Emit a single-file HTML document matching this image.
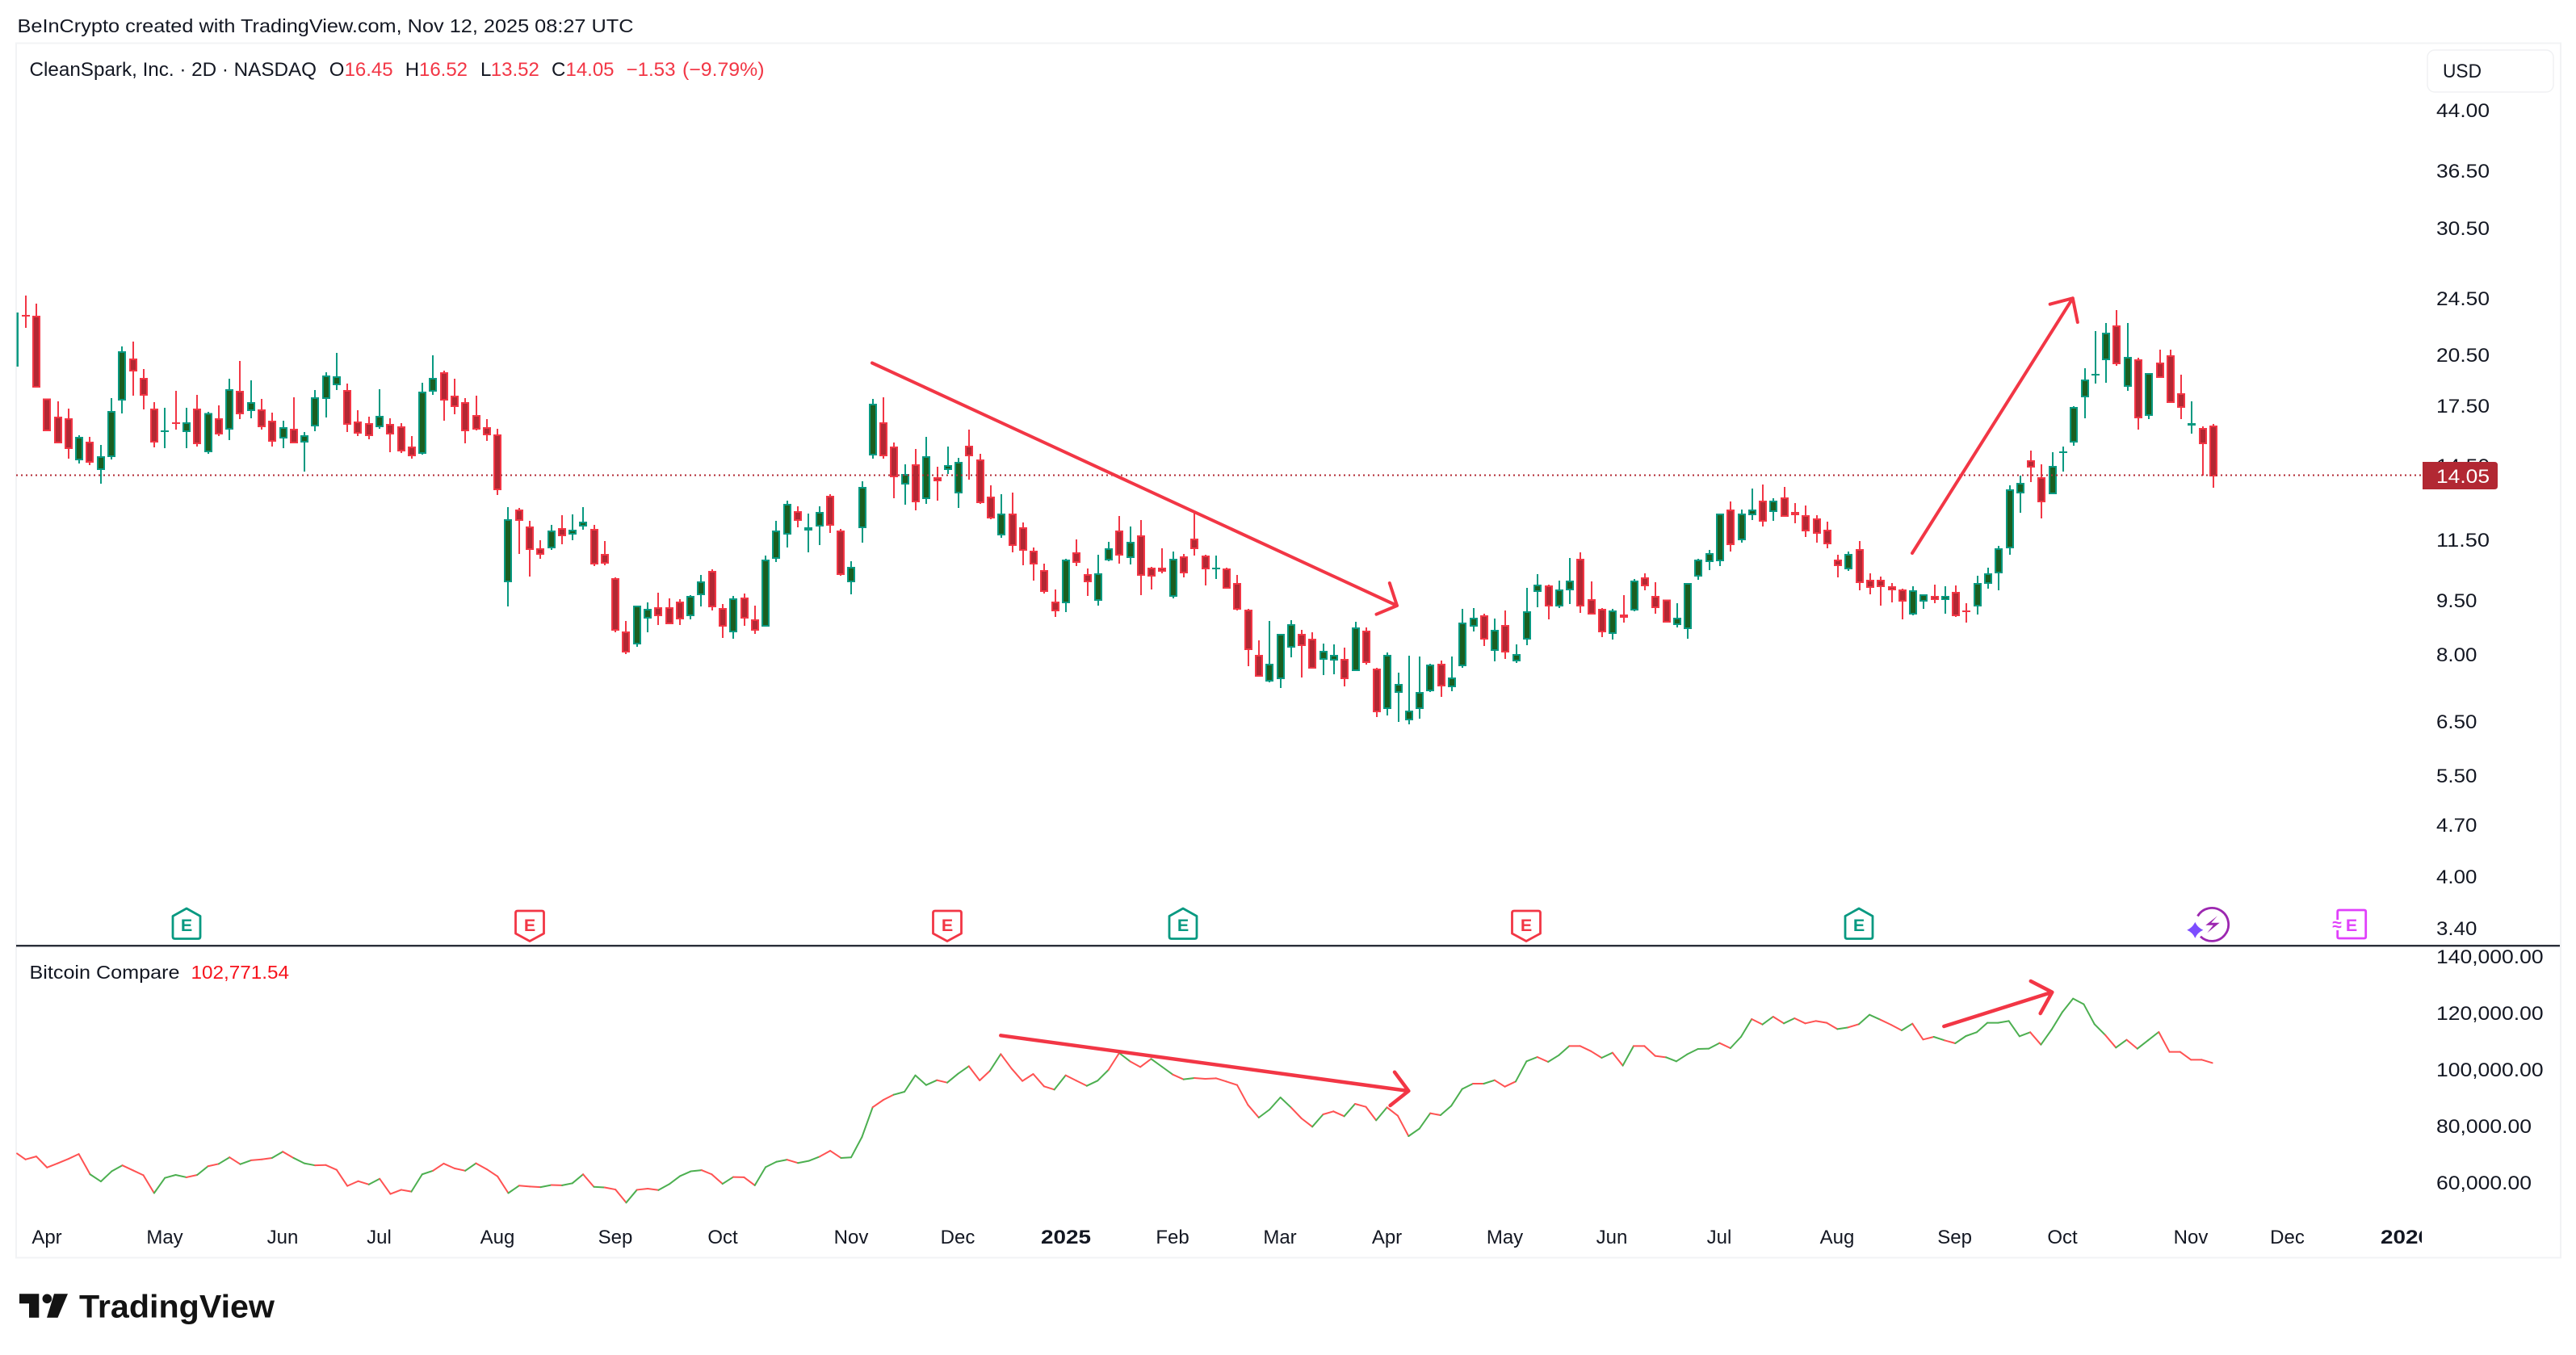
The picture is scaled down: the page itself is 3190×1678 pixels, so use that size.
<!DOCTYPE html>
<html>
<head>
<meta charset="utf-8">
<title>CleanSpark chart</title>
<style>
html,body{margin:0;padding:0;background:#fff;width:3190px;height:1678px;overflow:hidden}
svg{display:block;font-size:24px}
text{font-family:"Liberation Sans",sans-serif;fill:#131722}
.r{fill:#f23645}
.b{font-weight:bold}
</style>
</head>
<body>
<svg id="s" xmlns="http://www.w3.org/2000/svg" width="3190" height="1678" viewBox="0 0 3190 1678">
<defs>
<clipPath id="tc"><rect x="20" y="1500" width="2979" height="56"/></clipPath>
</defs>
<rect width="3190" height="1678" fill="#fff"/>
<text x="21.5" y="40" font-size="23.5" textLength="763" lengthAdjust="spacingAndGlyphs">BeInCrypto created with TradingView.com, Nov 12, 2025 08:27 UTC</text>
<rect x="20" y="53.5" width="3151" height="1504" fill="#fff" stroke="#f2f3f5" stroke-width="2"/>

<g id="candles" shape-rendering="crispEdges"></g>
<line x1="20" y1="588.5" x2="3000" y2="588.5" stroke="#b22833" stroke-width="2" stroke-dasharray="2 4"/>
<g id="btc" fill="none" stroke-width="2" stroke-linejoin="round"></g>

<rect x="3006" y="62" width="156" height="52" rx="9" fill="#fff" stroke="#f0f1f3" stroke-width="1.5"/>
<text x="3025" y="96" textLength="48" lengthAdjust="spacingAndGlyphs">USD</text>

<text x="36.5" y="94" textLength="355.5" lengthAdjust="spacingAndGlyphs">CleanSpark, Inc. · 2D · NASDAQ</text>
<text x="407.7" y="94">O</text><text class="r" x="426.6" y="94" textLength="60" lengthAdjust="spacingAndGlyphs">16.45</text>
<text x="501.7" y="94">H</text><text class="r" x="519" y="94" textLength="60" lengthAdjust="spacingAndGlyphs">16.52</text>
<text x="595" y="94">L</text><text class="r" x="607.8" y="94" textLength="60" lengthAdjust="spacingAndGlyphs">13.52</text>
<text x="683" y="94">C</text><text class="r" x="700.5" y="94" textLength="60" lengthAdjust="spacingAndGlyphs">14.05</text>
<text class="r" x="775.5" y="94" textLength="61" lengthAdjust="spacingAndGlyphs">−1.53</text>
<text class="r" x="845" y="94" textLength="101.5" lengthAdjust="spacingAndGlyphs">(−9.79%)</text>

<g id="prices">
<text x="3017" y="145" textLength="66" lengthAdjust="spacingAndGlyphs">44.00</text>
<text x="3017" y="220" textLength="66" lengthAdjust="spacingAndGlyphs">36.50</text>
<text x="3017" y="291" textLength="66" lengthAdjust="spacingAndGlyphs">30.50</text>
<text x="3017" y="378" textLength="66" lengthAdjust="spacingAndGlyphs">24.50</text>
<text x="3017" y="448" textLength="66" lengthAdjust="spacingAndGlyphs">20.50</text>
<text x="3017" y="511" textLength="66" lengthAdjust="spacingAndGlyphs">17.50</text>
<text x="3017" y="585" textLength="66" lengthAdjust="spacingAndGlyphs">14.50</text>
<text x="3017" y="677" textLength="66" lengthAdjust="spacingAndGlyphs">11.50</text>
<text x="3017" y="752" textLength="50.4" lengthAdjust="spacingAndGlyphs">9.50</text>
<text x="3017" y="819" textLength="50.4" lengthAdjust="spacingAndGlyphs">8.00</text>
<text x="3017" y="902" textLength="50.4" lengthAdjust="spacingAndGlyphs">6.50</text>
<text x="3017" y="969" textLength="50.4" lengthAdjust="spacingAndGlyphs">5.50</text>
<text x="3017" y="1030" textLength="50.4" lengthAdjust="spacingAndGlyphs">4.70</text>
<text x="3017" y="1094" textLength="50.4" lengthAdjust="spacingAndGlyphs">4.00</text>
<text x="3017" y="1158" textLength="50.4" lengthAdjust="spacingAndGlyphs">3.40</text>
<text x="3017" y="1193" textLength="132.6" lengthAdjust="spacingAndGlyphs">140,000.00</text>
<text x="3017" y="1263" textLength="132.6" lengthAdjust="spacingAndGlyphs">120,000.00</text>
<text x="3017" y="1333" textLength="132.6" lengthAdjust="spacingAndGlyphs">100,000.00</text>
<text x="3017" y="1403" textLength="118" lengthAdjust="spacingAndGlyphs">80,000.00</text>
<text x="3017" y="1473" textLength="118" lengthAdjust="spacingAndGlyphs">60,000.00</text>
</g>
<path d="M3000 572H3089q4 0 4 4V602q0 4-4 4H3000Z" fill="#b22833"/>
<text x="3017" y="598" textLength="66" lengthAdjust="spacingAndGlyphs" style="fill:#fff">14.05</text>

<rect x="20" y="1170" width="3150" height="2.4" fill="#2a2e39"/>

<text x="36.5" y="1212" font-size="23.5" textLength="186" lengthAdjust="spacingAndGlyphs">Bitcoin Compare</text>
<text x="236.5" y="1212" font-size="23.5" textLength="121.5" lengthAdjust="spacingAndGlyphs" style="fill:#f7131c">102,771.54</text>

<g text-anchor="middle">
<text x="58" y="1540">Apr</text><text x="204" y="1540">May</text><text x="350" y="1540">Jun</text><text x="469.5" y="1540">Jul</text>
<text x="616" y="1540">Aug</text><text x="762" y="1540">Sep</text><text x="895" y="1540">Oct</text><text x="1054" y="1540">Nov</text>
<text x="1186" y="1540">Dec</text>
<text x="1452" y="1540">Feb</text><text x="1585" y="1540">Mar</text><text x="1717.5" y="1540">Apr</text>
<text x="1863.5" y="1540">May</text><text x="1996" y="1540">Jun</text><text x="2129" y="1540">Jul</text>
<text x="2275" y="1540">Aug</text><text x="2420.6" y="1540">Sep</text><text x="2554" y="1540">Oct</text><text x="2713" y="1540">Nov</text><text x="2832.5" y="1540">Dec</text>
</g>
<text class="b" x="1289" y="1540" textLength="62" lengthAdjust="spacingAndGlyphs">2025</text>
<g clip-path="url(#tc)"><text class="b" x="2948" y="1540" textLength="62" lengthAdjust="spacingAndGlyphs">2026</text></g>

<!-- earnings markers -->
<g fill="#fff" stroke="#089981" stroke-width="2.8" stroke-linejoin="round">
<path d="M231 1125L248 1134.5V1160q0 2.5-2.500 2.500H216.500q-2.500 0-2.500-2.500V1134.500Z"/>
<path d="M1465 1125L1482 1134.5V1160q0 2.5-2.500 2.500H1450.500q-2.500 0-2.500-2.500V1134.500Z"/>
<path d="M2302 1125L2319 1134.5V1160q0 2.5-2.500 2.500H2287.500q-2.500 0-2.500-2.500V1134.500Z"/>
</g>
<g fill="#fff" stroke="#f23645" stroke-width="2.8" stroke-linejoin="round">
<path d="M638.500 1130.500q0-2.500 2.500-2.500H671q2.500 0 2.500 2.500V1156L656 1165.500L638.500 1156Z"/>
<path d="M1155.500 1130.500q0-2.500 2.500-2.500H1188q2.500 0 2.500 2.500V1156L1173 1165.500L1155.500 1156Z"/>
<path d="M1872.500 1130.500q0-2.500 2.500-2.500H1905q2.500 0 2.500 2.500V1156L1890 1165.500L1872.500 1156Z"/>
</g>
<g class="b" text-anchor="middle" font-weight="bold">
<text x="231" y="1153" font-size="21.500" style="fill:#089981">E</text>
<text x="1465" y="1153" font-size="21.500" style="fill:#089981">E</text>
<text x="2302" y="1153" font-size="21.500" style="fill:#089981">E</text>
<text x="656" y="1153" font-size="21.500" style="fill:#f23645">E</text>
<text x="1173" y="1153" font-size="21.500" style="fill:#f23645">E</text>
<text x="1890" y="1153" font-size="21.500" style="fill:#f23645">E</text>
<text x="2912" y="1153" font-size="21.500" style="fill:#e040fb">E</text>
<text x="2894" y="1152" font-size="21" style="fill:#e040fb">≈</text>
</g>
<path d="M2894.700 1139V1129q0-2 2-2H2927.700q2 0 2 2V1160q0 2-2 2H2896.700q-2 0-2-2V1152" fill="none" stroke="#e040fb" stroke-width="2.800"/>
<path d="M2721.500 1134.500A20.500 20.500 0 1 1 2725 1159.700" fill="none" stroke="#9c27b0" stroke-width="2.800"/>
<path d="M2746 1134.300L2731.300 1145.700H2740.700L2733.300 1155.300L2748.700 1142.700H2738.300Z" fill="#9c27b0"/>
<path d="M2718.300 1141.700Q2721.300 1148.700 2728.300 1151.700Q2721.300 1154.700 2718.300 1161.700Q2715.300 1154.700 2708.300 1151.700Q2715.300 1148.700 2718.300 1141.700Z" fill="#7c4dff"/>

<!-- drawn arrows -->
<g fill="none" stroke="#f23645" stroke-linecap="round" stroke-linejoin="round">
<path stroke-width="4" d="M1080 449.500L1730 750M1720.800 722L1730 750L1704.500 760.700"/>
<path stroke-width="4" d="M2368 685L2566.800 369.300M2538.700 376.700L2566.800 369.300L2572.800 399"/>
<path stroke-width="4.500" d="M1239.300 1282.300L1744.300 1351M1727 1327.700L1744.300 1351L1721.600 1369"/>
<path stroke-width="4.500" d="M2407.300 1271L2541.300 1228.700M2514.800 1215L2541.300 1228.700L2526.700 1255"/>
</g>

<!-- logo -->
<path d="M24 1602.300H48.300V1631.700H36V1614.300H24Z" fill="#131313"/>
<circle cx="58.300" cy="1608.300" r="5.800" fill="#131313"/>
<path d="M67 1602.300H84L71.500 1631.700H58Z" fill="#131313"/>
<text class="b" x="98" y="1631.700" font-size="40" textLength="242" lengthAdjust="spacingAndGlyphs" style="fill:#131313">TradingView</text>
</svg>
<script>
(function(){
var NS='http://www.w3.org/2000/svg';
function el(p,n,a){var e=document.createElementNS(NS,n);for(var k in a)e.setAttribute(k,a[k]);p.appendChild(e);return e;}
var segs=[
[340,"d78,150,155,198 d108,153,420,420 d460,460,582,582 d471,528,627,627 d498,534,648,684 u597,603,690,702 d603,621,699,708 u633,675,726,777 u459,507,678,687 u267,285,468,516 d249,312,360,450 d351,384,450,501 d474,498,624,642 u495,579,585,645 d432,549,555,576 u495,549,585,645 d447,498,630,639 u510,514,660,666 d486,534,594,600 u387,426,576,615 d321,432,519,537 u393,474,507,534 d462,501,567,576 d513,543,621,639 u543,567,609,645 d456,573,627,627 u585,597,624,732 u429,456,564,582 u363,375,462,531 u291,378,411,429 d405,429,558,585 d504,546,591,600 d528,552,600,612 u426,525,567,573 d534,555,594,660 d552,564,657,663 d600,639,675,684 u402,435,666,669 u300,384,435,447 d357,363,468,543 d387,450,492,519 d459,474,582,627 d450,522,576,579 d537,567,597,618 d573,594,801,819"],
[440,"u564,609,843,933 d567,573,615,738 d615,636,723,822 d687,717,741,756 u630,651,717,723 d594,642,672,702 u591,648,666,687 u564,618,636,648 d630,645,777,783 d690,738,774,780 d825,828,1023,1029 d987,1026,1104,1110 u930,930,1074,1083 u918,942,978,1029 d882,936,969,1002 d903,936,999,999 d906,915,981,1002 u891,894,969,981 u816,840,891,933 d795,801,936,948 d924,939,1008,1050 u894,903,1029,1053 d885,900,978,1005 d930,981,1023,1035 u744,759,1008,1008 u615,651,756,768 u540,552,666,714 d561,579,615,639 u588,639,651,732 u561,582,636,705 d516,522,633,660 d645,651,816,819 u765,786,843,888 u468,489,642,696 u162,180,372,384 d156,249,375,384 d324,339,453,531 u405,441,480,555 d348,405,546,576 u303,375,534,552 d414,453,468,540 u339,408,426,441 u381,396,513,567 d276,336,375,462 d366,387,549,552 d483,525,606,609 u516,588,669,678 d510,588,708,732"],
[400,"d741,759,846,900 d834,846,897,957 d894,918,999,1005 d990,1035,1071,1092 u876,879,1041,1074 d804,852,891,903 d912,933,963,1014 u861,930,1032,1050 u813,837,882,885 d717,771,864,894 u756,813,873,897 d732,789,939,1011 d906,909,942,990 d837,909,924,930 u849,876,1017,1023 d858,867,930,945 d705,801,840,864 d861,864,915,975 u864,909,915,951 d909,912,987,987 d936,966,1065,1068 d1062,1065,1215,1275 d1179,1233,1314,1314 u1107,1266,1332,1335 u1155,1155,1323,1356 u1104,1119,1206,1242 d1140,1155,1200,1317 d1149,1173,1284,1284 u1191,1218,1251,1308 u1194,1233,1254,1305 d1206,1248,1323,1350 u1110,1131,1293,1293 d1131,1143,1263,1269 d1281,1284,1446,1464 u1224,1233,1434,1458 u1299,1341,1374,1482 u1236,1440,1476,1491 u1239,1371,1434,1470 u1266,1269,1368,1371 d1254,1266,1350,1389 u1239,1317,1353,1368 u1062,1113,1275,1281 u1059,1095,1128,1146 d1080,1086,1176,1200 u1098,1140,1218,1257 d1068,1122,1224,1248 u1194,1230,1257,1263 u984,1071,1176,1197 u933,972,999,1056 d972,975,1053,1101 u957,990,1053,1059 u873,957,993,1044 d852,876,1053,1077 d960,1026,1083,1083 d1059,1062,1149,1167 u1062,1068,1155,1176 d1011,1083,1095,1113 u951,957,1068,1071 d930,945,978,993 d963,1014,1059,1080 d1027,1027,1113,1113"],
[340,"u1221,1275,1302,1311 u1146,1146,1317,1353 u1056,1059,1122,1134 u1023,1035,1068,1098 u888,888,1065,1083 d843,873,1005,1029 u873,888,987,996 u795,873,894,912 d780,840,918,936 u831,840,882,915 d789,828,900,900 d849,882,894,924 d858,894,954,975 d894,906,963,996 d918,948,1002,1017 d1041,1059,1083,1125 u1029,1038,1095,1101 d990,1020,1146,1173 d1110,1134,1164,1188 d1122,1134,1161,1230 d1146,1158,1173,1218 d1167,1170,1215,1281 u1158,1173,1263,1266 u1188,1188,1215,1242 d1152,1194,1209,1221 u1158,1194,1209,1260 d1155,1179,1269,1272 d1221,1248,1254,1293 u1119,1146,1233,1263 u1089,1110,1149,1167 u1008,1017,1110,1173 u783,798,1017,1041 u747,774,813,885 d654,690,717,771 d705,753,846,906 u660,711,816,816 u639,657,663,732 u489,492,624,636 u348,390,456,534 u210,369,375,405 u180,216,318,402 d132,189,333,339 u180,306,417,432 d309,315,534,576 u366,366,525,537 d279,327,384,384 d279,300,477,477 d372,441,495,537 u471,552,561,591 d564,570,630,747 d555,561,750,792"]
];
var g=document.getElementById('candles');
el(g,'rect',{x:20.5,y:387,width:2.4,height:67,fill:'#089981'});
var i=1;
segs.forEach(function(sg){
  var off=sg[0];
  sg[1].split(' ').forEach(function(c){
    var up=c[0]==='u',v=c.slice(1).split(',').map(function(n){return off+(+n)/3;});
    var x=Math.round(31.8+13.28*(i-1));
    var bc=up?'#089981':'#f23645',fc=up?'#1b5e20':'#b22833';
    el(g,'rect',{x:x-1,y:v[0],width:2,height:Math.max(v[3]-v[0],1),fill:bc});
    var h=Math.max(v[2]-v[1],2);
    el(g,'rect',{x:x-5,y:v[1],width:10,height:h,fill:bc});
    if(h>4)el(g,'rect',{x:x-3,y:v[1]+2,width:6,height:h-4,fill:fc});
    i++;
  });
});
var lines=[
[0,1.425,1100,2.71,"s30,890 r45,910 r64,900 r83,937 r102,923 r121,908 r139,892 r159,960 g178,984 g197,950 g216,930 r235,947 r253,963 r272,1023 g291,972 g310,962 g329,970 r348,962 g367,933 r386,925 g405,903 r424,926 g443,913 r462,910 r480,905 g499,884 r518,905 g537,923 g556,930 r575,929 r594,945 r613,999 r632,983 r651,994 g670,975 r689,1026 r708,1012 r726,1018 g745,960 g764,948 r783,924 r802,940 r821,948 g840,923 r859,943 r878,967 r897,1023 g916,998 r935,1001 r954,1003 g973,996 r992,997 g1010,990 g1029,960 r1048,1002 g1067,1004 r1086,1011 r1105,1055 g1124,1012 r1143,1008 r1162,1013 g1181,993 g1200,966 g1219,950 g1238,946 r1256,960 r1275,992 g1294,969 r1313,970 r1332,997 g1351,936 g1370,918 g1389,911 r1408,922 g1427,915 g1446,901 r1465,881 r1484,905 g1502,903 g1521,835 g1540,735 r1559,710"],
[1100,1.493,1100,3,"r10,767 g30,756 g50,695 g70,731 g90,713 r109,722 g129,689 g149,661 r169,714 r188,678 g208,616 r228,670 r248,716 r268,690 r288,736 r307,748 g328,695 r348,715 r367,734 g387,715 g407,675 r427,612 g447,643 r466,664 r486,634 g506,663 g526,692 r546,710 g566,705 r586,708 r606,706 r625,718 r645,731 r665,805 r685,852 g705,822 g725,777 g745,815 r764,855 r784,886 g804,840 r823,829 r843,847 g863,801 r883,812 r902,862 g922,814 r942,845 r962,921 g982,893 g1002,836 r1021,843 g1041,808 g1061,746 g1081,726 r1101,726 g1121,713 r1140,737 r1160,718 g1180,643 g1200,627 r1220,645 g1240,620 g1259,586 r1279,586 r1299,605 r1319,630 g1339,611 r1358,659 g1378,586 r1398,586 r1418,623 r1438,628 g1457,643 g1477,617 g1497,597 g1517,596 g1537,575 r1557,594"],
[2150,1.5077,1100,3,"g9,552 g29,486 r49,506 g69,477 r89,502 g109,483 r129,502 r149,493 r169,500 r189,523 g209,517 r229,505 g249,470 g269,488 r289,507 r309,528 g329,503 r349,562 r369,552 g389,565 r409,576 g429,549 g449,535 g469,500 g489,500 g509,493 g529,550 g549,535 r569,581 g589,525 g609,460 g629,410 g649,431 g669,505 g689,545 r709,592 g729,563 r749,596 g769,565 g789,534 r809,608 r829,608 r849,637 r869,637 r889,649"]
];
var b=document.getElementById('btc'),prev=null;
lines.forEach(function(l){
  l[4].split(' ').forEach(function(p){
    var c=p[0],v=p.slice(1).split(','),x=l[0]+(+v[0])/l[1],y=l[2]+(+v[1])/l[3];
    if(prev&&c!=='s')el(b,'line',{x1:prev[0],y1:prev[1],x2:x,y2:y,stroke:c==='g'?'#4caf50':'#ff5252','stroke-linecap':'round'});
    prev=[x,y];
  });
});
})();
</script>
</body>
</html>
